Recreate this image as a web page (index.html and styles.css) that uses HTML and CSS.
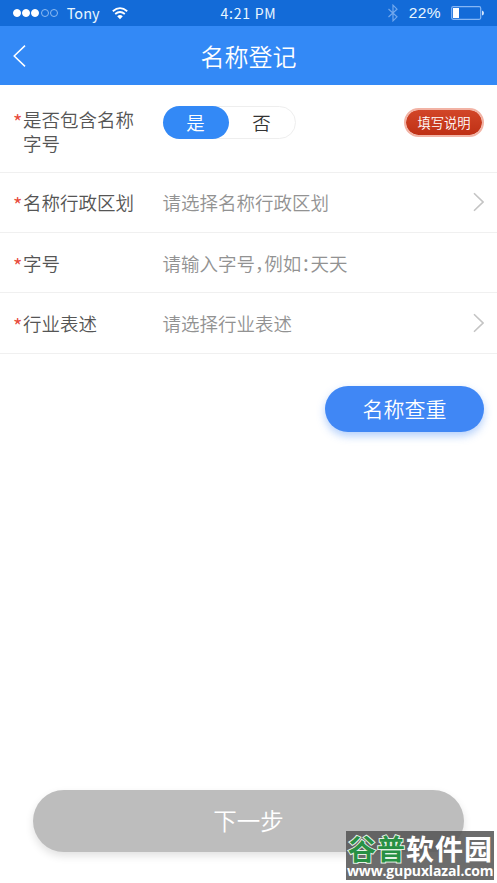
FILE: index.html
```html
<!DOCTYPE html>
<html lang="zh-CN">
<head>
<meta charset="utf-8">
<title>名称登记</title>
<link rel="stylesheet" href="styles.css">
</head>
<body>
<div class="screen">
  <div class="status">
    <div class="carrier">
      <div class="dots"><i class="full"></i><i class="full"></i><i class="full"></i><i></i><i></i></div>
      <span class="operator">Tony</span>
      <svg class="wifi" width="16" height="13" viewBox="0 0 16 13" fill="none" stroke="#fff" stroke-width="1.8"><path d="M.8 4.2Q8-2 15.2 4.2M3.2 7Q8 3 12.8 7"/><path d="M5.2 9.2Q8 7 10.8 9.2L8 12.2Z" fill="#fff" stroke="none"/></svg>
    </div>
    <time class="clock">4:21 PM</time>
    <div class="power">
      <svg width="10" height="18" viewBox="0 0 10 18" fill="none" stroke="#72a8ed" stroke-width="1.2"><path d="M.5 5 9 12.8 5 16.8V1.2L9 5.2.5 13"/></svg>
      <span class="percent">22%</span>
      <svg width="33" height="14" viewBox="0 0 33 14"><rect x=".7" y=".7" width="29" height="12.6" rx="1.5" fill="none" stroke="#85b6f5" stroke-width="1.2"/><rect x="2" y="2" width="6" height="10" fill="#fff"/><path d="M31 4.5q2 .5 2 2.5t-2 2.5z" fill="#d5e5fb"/></svg>
    </div>
  </div>
  <header class="navbar">
    <svg class="back" width="13" height="22" viewBox="0 0 13 22" fill="none" stroke="#fff" stroke-width="1.5"><path d="M12 .6 1.2 11 12 21.4"/></svg>
    <h1>名称登记</h1>
  </header>
  <main class="form">
    <div class="row first">
      <div class="label"><b>*</b><span>是否包含名称字号</span></div>
      <div class="toggle"><span class="on">是</span><span>否</span></div>
      <span class="help">填写说明</span>
    </div>
    <div class="row">
      <div class="label"><b>*</b><span>名称行政区划</span></div>
      <div class="value">请选择名称行政区划</div>
      <svg class="chevron" width="11" height="20" viewBox="0 0 11 20"><path d="M1 1.2 10 10 1 18.8"/></svg>
    </div>
    <div class="row">
      <div class="label"><b>*</b><span>字号</span></div>
      <div class="value">请输入字号&#xFF0C;例如&#xFF1A;天天</div>
    </div>
    <div class="row">
      <div class="label"><b>*</b><span>行业表述</span></div>
      <div class="value">请选择行业表述</div>
      <svg class="chevron" width="11" height="20" viewBox="0 0 11 20"><path d="M1 1.2 10 10 1 18.8"/></svg>
    </div>
    <div class="check">名称查重</div>
  </main>
  <footer class="footer"><div class="next">下一步</div></footer>
  <div class="mark">
    <div class="mark-name"><em>谷普</em>软件园</div>
    <div class="mark-url">www.gupuxlazal.com</div>
  </div>
</div>
</body>
</html>
```
FILE: styles.css
```css
* { box-sizing: border-box; }
body { margin: 0; background: #fff; font-family: "Noto Sans CJK SC", sans-serif; }
.screen { position: relative; display: flex; flex-direction: column; height: 883px; overflow: hidden; }
svg { display: block; flex: none; }

.status { display: grid; grid-template-columns: 1fr auto 1fr; align-items: center; height: 26px; padding: 0 13px; background: #136bd8; color: #e8f6ff; }
.carrier, .power { display: flex; align-items: center; }
.power { justify-content: flex-end; }
.dots { display: flex; gap: 1.2px; }
.dots i { width: 8px; height: 8px; border: 1px solid #8ebcf3; border-radius: 50%; }
.dots .full { background: #fff; border-color: #fff; }
.operator { margin-left: 9px; font-size: 14.5px; line-height: 26px; }
.wifi { margin-left: 12px; }
.clock { font-size: 14px; line-height: 26px; letter-spacing: .75px; }
.percent { margin: 0 10px 0 11px; font: 15.5px/26px "Liberation Sans", sans-serif; letter-spacing: .4px; }

.navbar { display: grid; grid-template-columns: 13px 1fr 13px; align-items: center; height: 58.5px; padding: 2px 13px 0; background: #3389f6; color: #fff; }
.navbar h1 { margin: 0; font-size: 24px; font-weight: 350; line-height: 56px; text-align: center; }

.form { display: flex; flex-direction: column; flex: 1; }
.row { display: flex; align-items: center; height: 60.4px; padding: 0 13px; border-bottom: 1px solid #f0f0f0; font-size: 18.5px; font-weight: 350; line-height: 24px; }
.first { height: 88px; align-items: flex-start; padding-top: 22px; }
.label { display: flex; width: 149.5px; color: #555; }
.label b { width: 10px; height: 24px; padding-top: 3px; color: #e84c3d; font-size: 20px; font-weight: 400; }
.label span { width: 112px; }
.value { flex: 1; color: #929292; white-space: nowrap; font-feature-settings: "halt"; }
.chevron { fill: none; stroke: #c4c4c4; stroke-width: 1.6; }
.toggle { display: flex; width: 133px; height: 33px; margin-top: -1px; border: 1px solid #eee; border-radius: 17px; color: #333; }
.toggle span { flex: 1; line-height: 31px; text-align: center; }
.toggle .on { margin: -1px 0 -1px -1px; border-radius: 17px; background: #3389f6; color: #fff; line-height: 33px; }
.help { width: 80px; height: 29px; margin: 1px 0 0 auto; border: 2px solid #f2b3a5; border-radius: 15px; background: linear-gradient(#d24628, #bf3015) padding-box; color: #fff; font-size: 13.3px; line-height: 25px; text-align: center; }
.check { align-self: flex-end; width: 159px; height: 46px; margin: 32px 13px 0 0; border-radius: 24px; background: #4087f5; box-shadow: 0 4px 8px #4087f566; color: #fff; font-size: 21px; font-weight: 350; line-height: 45px; text-align: center; }

.footer { padding: 0 33px 31px; }
.next { height: 62.5px; border-radius: 32px; background: #bdbdbd; box-shadow: 0 4px 8px #0000001f; color: #fff; font-size: 23.5px; font-weight: 350; line-height: 61px; text-align: center; }

.mark { position: absolute; left: 346px; top: 831px; width: 148px; height: 49px; background: #555d; color: #fff; white-space: nowrap; }
.mark-name { height: 32px; padding: 5px 0 0 2px; font-size: 28px; font-weight: 700; line-height: 25px; letter-spacing: 1px; }
.mark-name em { color: #279044; font-style: normal; -webkit-text-stroke: 2px #e4f2e6; paint-order: stroke fill; }
.mark-url { padding-left: 1px; font: 700 14px/16px "Open Sans", sans-serif; letter-spacing: -.15px; }
```
